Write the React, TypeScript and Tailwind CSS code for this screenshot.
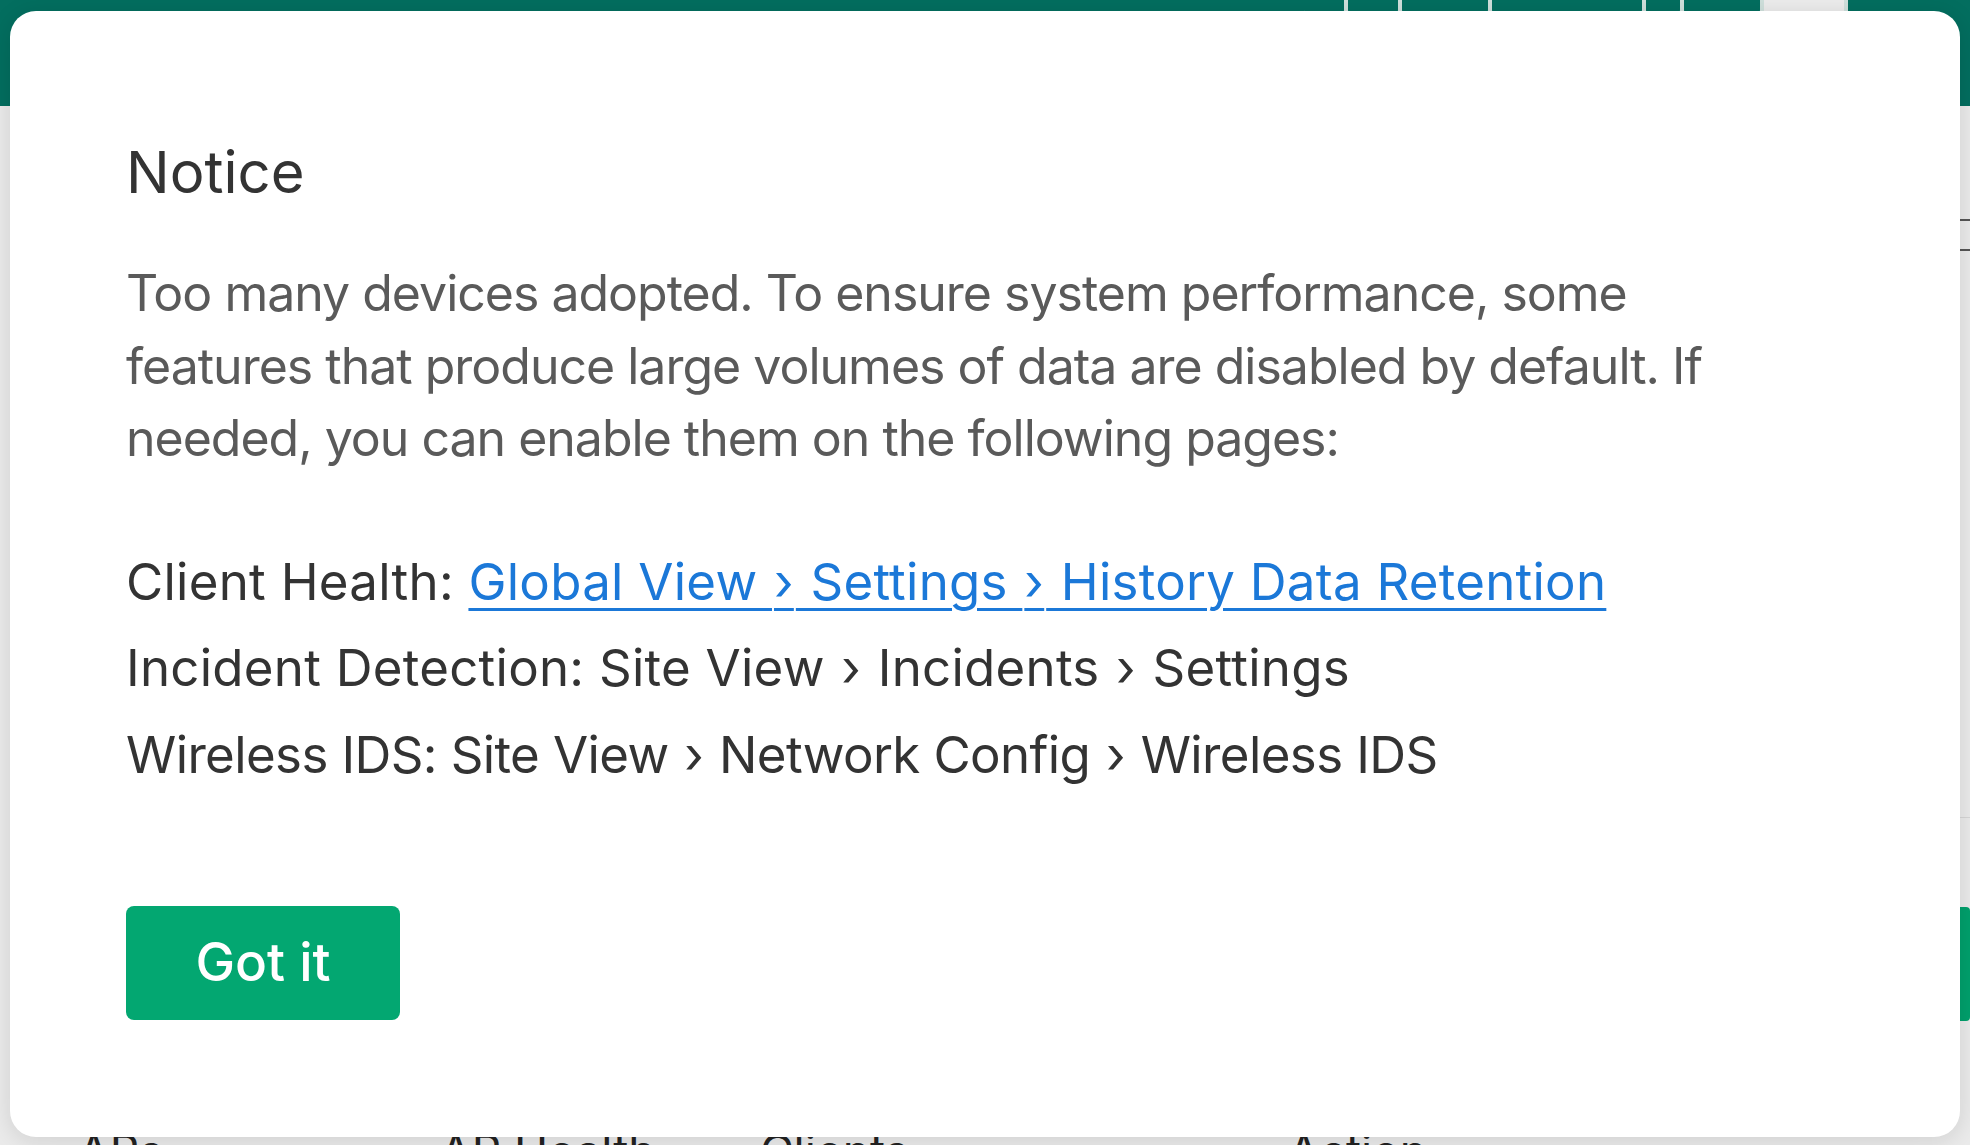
import React from "react";

const FONT = { fontFamily: "Inter, 'Noto Sans', 'Liberation Sans', sans-serif" };

/**
 * Page behind the dialog: only its edges peek out around the modal, so it is
 * kept rough — a teal header, a grey body, a table header row at the bottom.
 */
function BackgroundPage() {
  return (
    <div className="flex h-[1145px] w-full flex-col overflow-hidden bg-[#ebebeb]">
      <header className="flex h-[106px] shrink-0 items-start bg-[#036e5f]">
        <div className="ml-auto mr-[10px] flex h-[14px] items-start gap-[4px] bg-[#cfe0dc]">
          <div className="h-[14px] w-[40px] rounded-b bg-[#036e5f]" />
          <div className="h-[14px] w-[50px] rounded-b bg-[#036e5f]" />
          <div className="h-[14px] w-[86px] rounded-b bg-[#036e5f]" />
          <div className="h-[14px] w-[150px] rounded-b bg-[#036e5f]" />
          <div className="h-[14px] w-[34px] rounded-b bg-[#036e5f]" />
          <div className="h-[14px] w-[76px] rounded-b bg-[#036e5f]" />
          <div className="h-[14px] w-[80px] bg-[#ececec]" />
          <div className="h-[14px] w-[112px] bg-[#036e5f]" />
        </div>
      </header>
      <div className="flex flex-1 flex-col pl-[20px]">
        <div className="flex h-[113px] items-start justify-end">
          <div className="mt-[113px] h-[32px] w-[20px] border-y-2 border-l-2 border-[#555]" />
        </div>
        <div className="mt-[598px] h-px shrink-0 bg-[#d6d6d6]" />
        <div className="mt-[89px] flex shrink-0 justify-end">
          <div className="h-[114px] w-[60px] rounded bg-[#00a06c]" />
        </div>
        <div className="mt-[96px] flex shrink-0 text-[46px] text-[#222]" style={FONT}>
          <span className="w-[420px] pl-[58px]">APs</span>
          <span className="w-[320px]">AP Health</span>
          <span className="w-[528px]">Clients</span>
          <span>Action</span>
        </div>
      </div>
    </div>
  );
}

function Crumb({ children }: { children: React.ReactNode }) {
  return <span className="px-[2px]">{children}</span>;
}

function NoticeDialog() {
  return (
    <div
      className="absolute left-[10px] top-[11px] flex h-[1126px] w-[1950px] flex-col rounded-[26px] bg-white pl-[116px] pt-[127px] shadow-[0_4px_24px_rgba(0,0,0,0.12)]"
      style={FONT}
    >
      <h2 className="text-[58px] font-normal leading-[68px] text-[#333]">Notice</h2>

      <p className="mt-[51px] max-w-[1625px] text-[50px] leading-[72.5px] tracking-[-0.02em] text-[#5a5a5a]">
        Too many devices adopted. To ensure system performance, some features that produce large
        volumes of data are disabled by default. If needed, you can enable them on the following
        pages:
      </p>

      <div className="mt-[64px] text-[51px] leading-[86.5px] tracking-[0.005em] text-[#333]">
        <div>
          Client Health:{" "}
          <a className="text-[#1b78d8] underline decoration-[3px] underline-offset-[8px]" href="#">
            Global View <Crumb>›</Crumb> Settings <Crumb>›</Crumb> History Data Retention
          </a>
        </div>
        <div>
          Incident Detection: Site View <Crumb>›</Crumb> Incidents <Crumb>›</Crumb> Settings
        </div>
        <div className="tracking-[-0.012em]">
          Wireless IDS: Site View <Crumb>›</Crumb> Network Config <Crumb>›</Crumb> Wireless IDS
        </div>
      </div>

      <div className="mt-[108px]">
        <button className="h-[114px] w-[274px] rounded-[8px] bg-[#03a771] text-[53px] font-medium text-white">
          Got it
        </button>
      </div>
    </div>
  );
}

export default function App() {
  return (
    <div className="relative h-[1145px] w-[1970px] overflow-hidden">
      <BackgroundPage />
      <NoticeDialog />
    </div>
  );
}
